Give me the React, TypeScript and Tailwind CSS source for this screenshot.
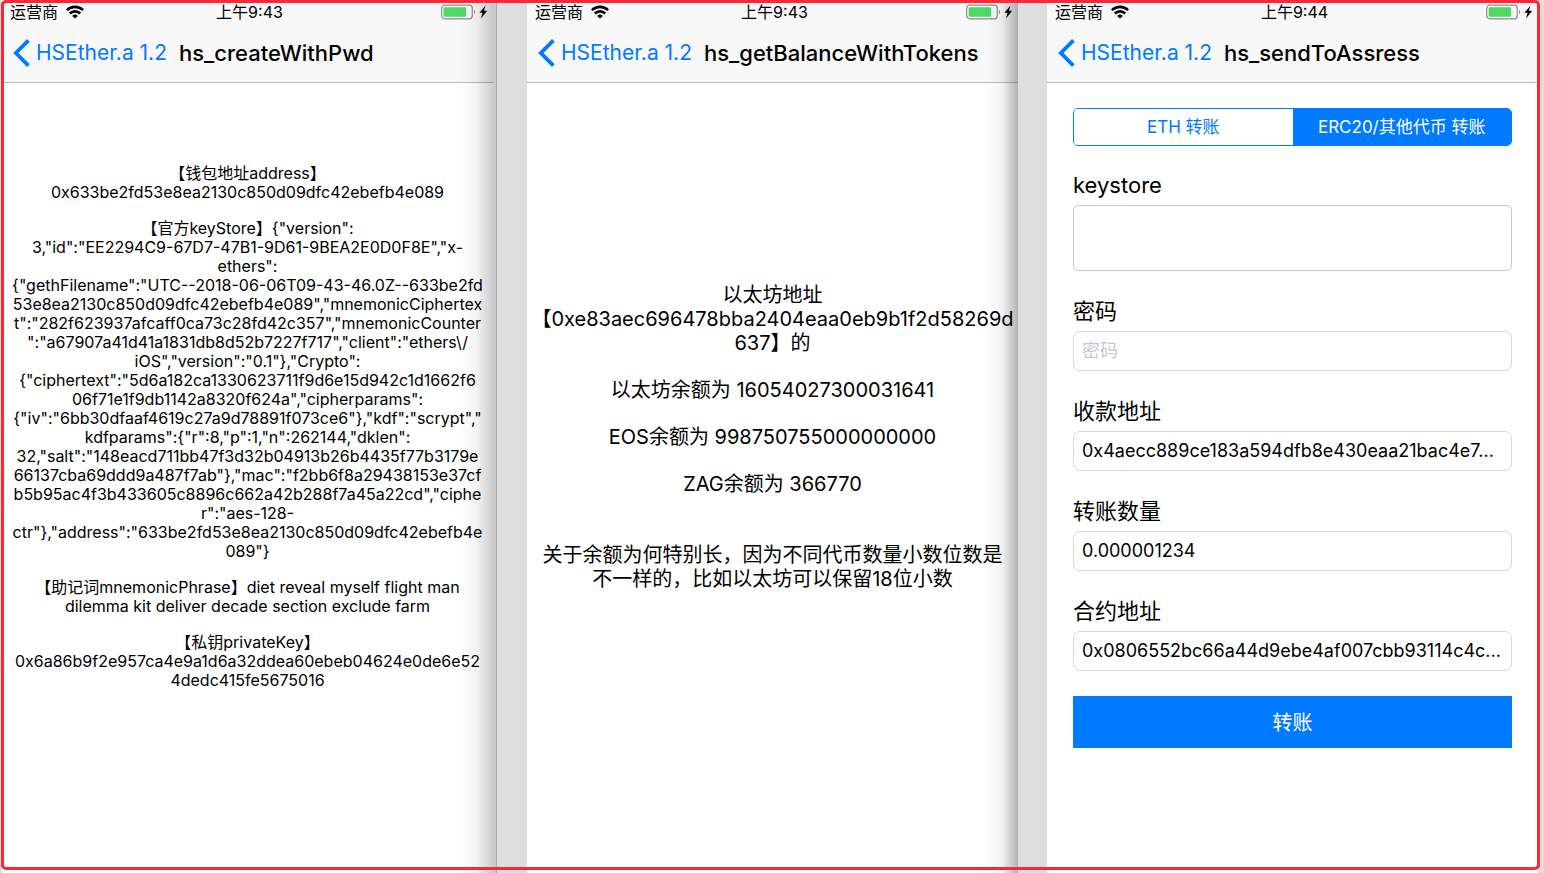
import { useState, ReactNode } from 'react'
import clsx from 'clsx'

interface PhoneProps {
  time: string
  title: string
  shadow?: string
  children: ReactNode
}

const WALLET_SECTIONS = [
  ['【钱包地址address】', '0x633be2fd53e8ea2130c850d09dfc42ebefb4e089'],
  [
    '【官方keyStore】{"version":',
    '3,"id":"EE2294C9-67D7-47B1-9D61-9BEA2E0D0F8E","x-',
    'ethers":',
    '{"gethFilename":"UTC--2018-06-06T09-43-46.0Z--633be2fd',
    '53e8ea2130c850d09dfc42ebefb4e089","mnemonicCiphertex',
    't":"282f623937afcaff0ca73c28fd42c357","mnemonicCounter',
    '":"a67907a41d41a1831db8d52b7227f717","client":"ethers\\/',
    'iOS","version":"0.1"},"Crypto":',
    '{"ciphertext":"5d6a182ca1330623711f9d6e15d942c1d1662f6',
    '06f71e1f9db1142a8320f624a","cipherparams":',
    '{"iv":"6bb30dfaaf4619c27a9d78891f073ce6"},"kdf":"scrypt","',
    'kdfparams":{"r":8,"p":1,"n":262144,"dklen":',
    '32,"salt":"148eacd711bb47f3d32b04913b26b4435f77b3179e',
    '66137cba69ddd9a487f7ab"},"mac":"f2bb6f8a29438153e37cf',
    'b5b95ac4f3b433605c8896c662a42b288f7a45a22cd","ciphe',
    'r":"aes-128-',
    'ctr"},"address":"633be2fd53e8ea2130c850d09dfc42ebefb4e',
    '089"}',
  ],
  [
    '【助记词mnemonicPhrase】diet reveal myself flight man',
    'dilemma kit deliver decade section exclude farm',
  ],
  [
    '【私钥privateKey】',
    '0x6a86b9f2e957ca4e9a1d6a32ddea60ebeb04624e0de6e52',
    '4dedc415fe5675016',
  ],
]

const BALANCE_SECTIONS = [
  ['以太坊地址', '【0xe83aec696478bba2404eaa0eb9b1f2d58269d', '637】的'],
  ['以太坊余额为 16054027300031641'],
  ['EOS余额为 998750755000000000'],
  ['ZAG余额为 366770'],
]

const BALANCE_NOTE = [
  '关于余额为何特别长，因为不同代币数量小数位数是',
  '不一样的，比如以太坊可以保留18位小数',
]

const FIELDS = [
  { id: 'password', label: '密码', type: 'password', placeholder: '密码', value: '' },
  { id: 'to', label: '收款地址', type: 'text', value: '0x4aecc889ce183a594dfb8e430eaa21bac4e7...' },
  { id: 'amount', label: '转账数量', type: 'text', value: '0.000001234' },
  { id: 'contract', label: '合约地址', type: 'text', value: '0x0806552bc66a44d9ebe4af007cbb93114c4c...' },
]

const TABS = ['ETH 转账', 'ERC20/其他代币 转账']

function StatusBar({ time }: { time: string }) {
  return (
    <div className="grid h-6 grid-cols-3 items-center pr-1 pb-px pl-2 text-base leading-6">
      <div className="flex items-center gap-2">
        <span>运营商</span>
        <svg viewBox="0 0 18 14" className="h-[14px] w-[18px]" fill="none" stroke="#000" strokeWidth="2.6">
          <path d="M0.9 5.2a11.5 11.5 0 0 1 16.2 0" />
          <path d="M3.8 8.5a7.4 7.4 0 0 1 10.4 0" />
          <path d="M9 13.6 6.2 10.9a4 4 0 0 1 5.6 0z" fill="#000" stroke="none" />
        </svg>
      </div>
      <span className="text-center">{time}</span>
      <div className="flex items-center justify-end">
        <svg viewBox="0 0 48 16" className="h-4 w-12" fill="none">
          <rect x="0.7" y="1.2" width="30.6" height="13.6" rx="3" stroke="#8c8c8c" strokeWidth="1.2" />
          <rect x="2.6" y="3.2" width="22.4" height="9.6" rx="0.8" fill="#4cd964" />
          <path d="M33 5.8c1.4.6 1.4 3.8 0 4.4z" fill="#8c8c8c" />
          <path d="M44.6 1.4 38.4 8.8h3.2l-1.6 5.8 6.2-7.8h-3.4z" fill="#000" />
        </svg>
      </div>
    </div>
  )
}

function Phone({ time, title, shadow, children }: PhoneProps) {
  return (
    <section className="relative flex min-w-0 flex-1 flex-col bg-white">
      <header className="border-b border-[#b9b9bb] bg-[#f8f8f8]">
        <StatusBar time={time} />
        <nav className="flex h-[58px] items-center pl-[11px] text-[22px] whitespace-nowrap">
          <a href="#" className="flex items-center gap-[6px] text-[21px] text-[#007aff]">
            <svg viewBox="0 0 17 28" className="h-7 w-[17px]" fill="none" stroke="currentColor" strokeWidth="3.8">
              <path d="M15.4 1.4 2.9 14l12.5 12.6" />
            </svg>
            HSEther.a 1.2
          </a>
          <h1 className="ml-3 font-medium">{title}</h1>
        </nav>
      </header>
      {children}
      {shadow && (
        <div
          className={clsx(
            'pointer-events-none absolute inset-y-0 right-0 w-8 bg-linear-to-r from-transparent via-black/5',
            shadow
          )}
        />
      )}
    </section>
  )
}

function Lines({ lines }: { lines: string[] }) {
  return (
    <p className="flex flex-col items-center">
      {lines.map((line) => (
        <span key={line} className="whitespace-nowrap">{line}</span>
      ))}
    </p>
  )
}

function TransferForm() {
  const [tab, setTab] = useState(1)
  const [keystore, setKeystore] = useState('')
  const [values, setValues] = useState<Record<string, string>>(
    Object.fromEntries(FIELDS.map((f) => [f.id, f.value]))
  )

  return (
    <form className="flex flex-col px-[26px] pt-[25px]" onSubmit={(e) => e.preventDefault()}>
      <div className="flex h-[38px] overflow-hidden rounded-[5px] border border-[#007aff]">
        {TABS.map((name, i) => (
          <button
            key={name}
            type="button"
            onClick={() => setTab(i)}
            className={clsx('flex-1 pt-0.5 text-[17px]', tab === i ? 'bg-[#007aff] text-white' : 'bg-white text-[#007aff]')}
          >
            {name}
          </button>
        ))}
      </div>

      <label htmlFor="keystore" className="mt-5 text-[22px] leading-[39px]">keystore</label>
      <textarea
        id="keystore"
        value={keystore}
        onChange={(e) => setKeystore(e.target.value)}
        className="h-[66px] resize-none rounded-[5px] border border-[#c6c6c6] px-2 text-lg outline-none"
      />

      {FIELDS.map((field) => (
        <div key={field.id} className="mt-5 flex flex-col">
          <label htmlFor={field.id} className="text-[22px] leading-10">{field.label}</label>
          <input
            id={field.id}
            type={field.type}
            placeholder={field.placeholder}
            value={values[field.id]}
            onChange={(e) => setValues({ ...values, [field.id]: e.target.value })}
            className="h-10 rounded-[7px] border border-[#d6d6d6] px-2 pb-0.5 text-lg outline-none placeholder:text-[#c7c7cd]"
          />
        </div>
      ))}

      <button type="submit" className="mt-[25px] h-[52px] bg-[#007aff] pt-0.5 text-xl text-white">转账</button>
    </form>
  )
}

export default function App() {
  return (
    <div className="relative flex min-h-screen bg-[#dedede] pr-[6px] pl-[2px] font-['Inter','Noto_Sans_CJK_SC',sans-serif] text-black">
      <Phone time="上午9:43" title="hs_createWithPwd" shadow="to-black/20">
        <div className="flex flex-col gap-[17px] pt-[81px] text-base leading-[19px]">
          {WALLET_SECTIONS.map((lines) => (
            <Lines key={lines[0]} lines={lines} />
          ))}
        </div>
      </Phone>
      <div className="w-[34px] shrink-0">
        <div className="h-full w-1 border-r border-[#a8a8a8] bg-[#c9c9c9]" />
      </div>

      <Phone time="上午9:43" title="hs_getBalanceWithTokens" shadow="to-black/30">
        <div className="flex flex-col gap-[23px] pt-[200px] text-xl leading-6">
          {BALANCE_SECTIONS.map((lines) => (
            <Lines key={lines[0]} lines={lines} />
          ))}
          <div className="mt-6">
            <Lines lines={BALANCE_NOTE} />
          </div>
        </div>
      </Phone>
      <div className="w-[29px] shrink-0" />

      <Phone time="上午9:44" title="hs_sendToAssress">
        <TransferForm />
      </Phone>

      {/* 红色外框 */}
      <div className="pointer-events-none absolute top-0 right-1 bottom-[3px] left-px rounded-[5px] border-3 border-[#ff2636]" />
    </div>
  )
}
